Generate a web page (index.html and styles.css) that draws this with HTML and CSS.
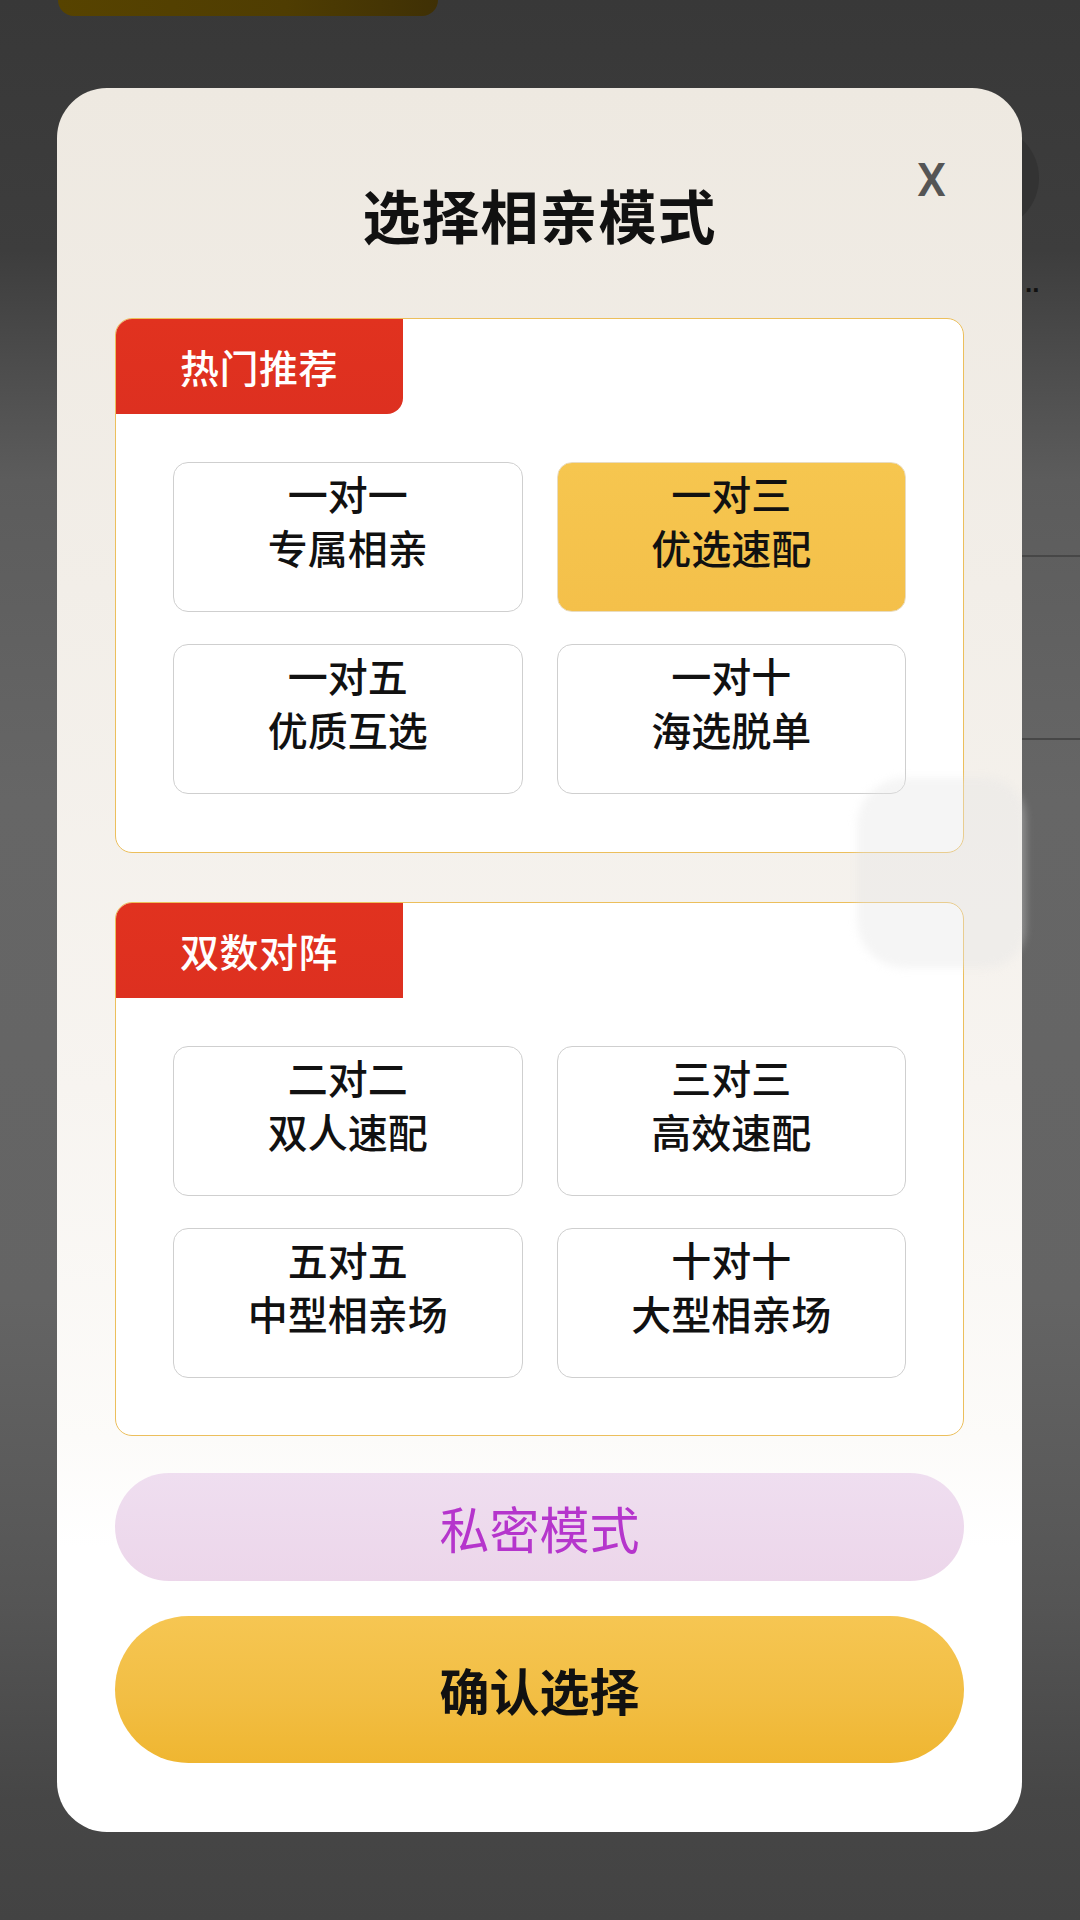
FILE: index.html
```html
<!DOCTYPE html>
<html lang="zh-CN">
<head>
<meta charset="utf-8">
<title>选择相亲模式</title>
<link rel="stylesheet" href="styles.css">
</head>
<body>
<div class="screen">
  <div class="bg-bar"></div>
  <div class="bg-circle"></div>
  <div class="bg-dots">..</div>
  <div class="bg-line bg-line-1"></div>
  <div class="bg-line bg-line-2"></div>

  <div class="modal">
    <div class="close">X</div>
    <h1 class="title">选择相亲模式</h1>

    <section class="card">
      <div class="tag tag-round">热门推荐</div>
      <div class="grid">
        <div class="opt"><span>一对一</span><span>专属相亲</span></div>
        <div class="opt opt-active"><span>一对三</span><span>优选速配</span></div>
        <div class="opt"><span>一对五</span><span>优质互选</span></div>
        <div class="opt"><span>一对十</span><span>海选脱单</span></div>
      </div>
    </section>

    <section class="card card-second">
      <div class="tag">双数对阵</div>
      <div class="grid">
        <div class="opt"><span>二对二</span><span>双人速配</span></div>
        <div class="opt"><span>三对三</span><span>高效速配</span></div>
        <div class="opt"><span>五对五</span><span>中型相亲场</span></div>
        <div class="opt"><span>十对十</span><span>大型相亲场</span></div>
      </div>
    </section>

    <div class="btn-private">私密模式</div>
    <div class="btn-confirm">确认选择</div>

    <div class="blob"></div>
  </div>
</div>
</body>
</html>
```

FILE: styles.css
```css
* {
  box-sizing: border-box;
}

html, body {
  margin: 0;
  padding: 0;
}

body {
  width: 1080px;
  height: 1920px;
  overflow: hidden;
  font-family: "Noto Sans CJK SC", "Noto Sans", sans-serif;
  background: linear-gradient(180deg, #383838 0px, #3d3d3d 250px, #5c5c5c 480px, #666666 800px, #646464 1300px, #555555 1600px, #464646 1800px, #434343 1920px);
}

.screen {
  position: relative;
  width: 1080px;
  height: 1920px;
  padding: 88px 0 0 57px;
}

.bg-bar {
  position: absolute;
  left: 58px;
  top: 0;
  width: 380px;
  height: 16px;
  background: linear-gradient(90deg, #574300 0%, #4f3d02 60%, #3f3005 100%);
  border-radius: 0 0 16px 16px;
}

.bg-circle {
  position: absolute;
  left: 935px;
  top: 126px;
  width: 104px;
  height: 104px;
  border-radius: 50%;
  background: #333333;
}

.bg-dots {
  position: absolute;
  left: 1025px;
  top: 268px;
  font-size: 26px;
  line-height: 30px;
  color: #111;
  font-family: "Liberation Sans", sans-serif;
  font-weight: bold;
}

.bg-line {
  position: absolute;
  left: 1022px;
  width: 58px;
  height: 2px;
  background: #474747;
}

.bg-line-1 {
  top: 555px;
}

.bg-line-2 {
  top: 738px;
}

.modal {
  position: relative;
  width: 965px;
  height: 1744px;
  border-radius: 50px;
  padding: 91px 58px 69px;
  display: flex;
  flex-direction: column;
  background: linear-gradient(180deg, #eee9e1 0px, #f2eee8 500px, #f7f4f0 1000px, #fcfbf9 1350px, #ffffff 1460px, #ffffff 1744px);
}

.close {
  position: absolute;
  top: 64px;
  right: 76px;
  font-family: Roboto, "Liberation Sans", sans-serif;
  font-weight: 500;
  font-size: 46px;
  line-height: 56px;
  color: #555555;
}

.title {
  margin: 0;
  text-align: center;
  font-size: 58px;
  line-height: 70px;
  font-weight: 700;
  color: #111111;
  letter-spacing: 1px;
}

.card {
  margin-top: 69px;
  background: #ffffff;
  border: 1.5px solid #ecbf5c;
  border-radius: 17px;
  overflow: hidden;
}

.card-second {
  margin-top: 49px;
}

.tag {
  width: 287px;
  height: 95px;
  background: linear-gradient(180deg, #e1321f, #dd3020);
  color: #ffffff;
  font-size: 39px;
  font-weight: 500;
  line-height: 95px;
  padding-left: 64px;
  letter-spacing: 0.5px;
}

.tag-round {
  border-bottom-right-radius: 16px;
}

.grid {
  display: grid;
  grid-template-columns: 1fr 1fr;
  column-gap: 34px;
  row-gap: 32px;
  padding: 48px 57px 62px;
}

.opt {
  height: 150px;
  border: 1.5px solid #cfcfcf;
  border-radius: 15px;
  background: #ffffff;
  display: flex;
  flex-direction: column;
  align-items: center;
  padding-top: 3px;
  font-size: 40px;
  line-height: 54px;
  font-weight: 500;
  color: #111111;
}

.opt-active {
  background: linear-gradient(180deg, #f6c64f 0%, #f4c04a 100%);
  border-color: #e9dcc0;
}

.btn-private {
  margin-top: 37px;
  height: 108px;
  border-radius: 54px;
  background: linear-gradient(180deg, #efdef0 0%, #ecd6ea 100%);
  color: #b535cc;
  font-size: 50px;
  line-height: 108px;
  text-align: center;
  font-weight: 400;
}

.btn-confirm {
  margin-top: 35px;
  height: 147px;
  border-radius: 74px;
  background: linear-gradient(180deg, #f6c652 0%, #f2be44 55%, #efb631 100%);
  color: #111111;
  font-size: 50px;
  line-height: 147px;
  text-align: center;
  font-weight: 700;
}

.blob {
  position: absolute;
  left: 800px;
  top: 690px;
  width: 168px;
  height: 190px;
  border-radius: 48px 40px 40px 48px;
  background: rgba(228, 228, 228, 0.38);
  filter: blur(4px);
  pointer-events: none;
}
```
